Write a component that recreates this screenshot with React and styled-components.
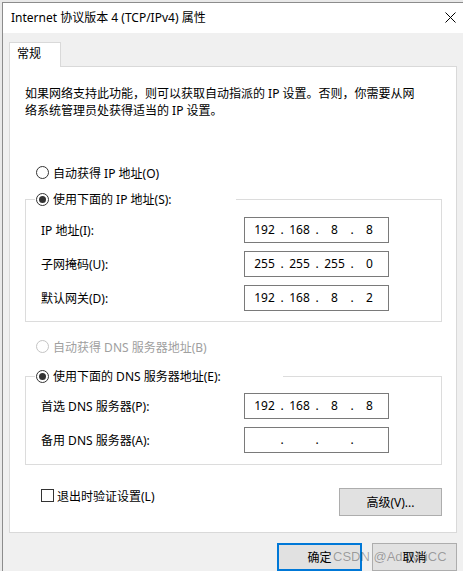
import React from 'react';
import styled, { createGlobalStyle } from 'styled-components';

const GlobalStyle = createGlobalStyle`
  html, body {
    margin: 0;
    padding: 0;
    background: #e9e9e9;
    overflow: hidden;
  }
  body {
    font-family: "Noto Sans", "Noto Sans CJK SC", sans-serif;
    font-size: 12px;
    color: #000;
  }
`;

const Page = styled.div`
  position: relative;
  width: 463px;
  height: 571px;
  overflow: hidden;
`;

const Window = styled.div`
  margin: 2px 0 0 2px;
  width: 470px;
  height: 580px;
  border-top: 1px solid #8c8c8c;
  border-left: 1px solid #8c8c8c;
  background: #f0f0f0;
`;

const TitleBar = styled.div`
  height: 30px;
  background: #fff;
  display: flex;
  align-items: center;
  justify-content: space-between;
  padding: 0 7px 0 8px;
  width: 460px;
  box-sizing: border-box;
`;

const Title = styled.span`
  line-height: 16px;
  margin-top: -1px;
  white-space: nowrap;
`;

const CloseIcon = styled.svg`
  display: block;
  margin-top: -1px;
`;

const Body = styled.div`
  padding: 9px 0 0 6px;
`;

const TabRow = styled.div`
  display: flex;
`;

const Tab = styled.div`
  position: relative;
  z-index: 1;
  height: 25px;
  box-sizing: border-box;
  padding: 0 7px;
  line-height: 22px;
  border: 1px solid #d9d9d9;
  border-bottom: none;
  background: #fff;
  margin-bottom: -1px;
  width: 52px;
`;

const Panel = styled.div`
  width: 448px;
  height: 467px;
  box-sizing: border-box;
  background: #fff;
  border: 1px solid #d9d9d9;
  padding: 18px 14px 0 15px;
  display: flex;
  flex-direction: column;
  align-items: flex-start;
`;

const Description = styled.p`
  margin: 0;
  line-height: 17px;
  white-space: nowrap;
`;

const RadioRow = styled.label`
  display: flex;
  align-items: center;
  gap: 4px;
  height: ${p => p.$height || 17}px;
  margin-left: ${p => p.$indent || 0}px;
  margin-top: ${p => p.$top || 0}px;
  color: ${p => (p.$disabled ? '#a0a0a0' : '#000')};
  white-space: nowrap;
`;

const RadioCircle = styled.span`
  width: 13px;
  height: 13px;
  box-sizing: border-box;
  border-radius: 50%;
  border: 1px solid ${p => (p.$disabled ? '#c4c4c4' : '#333')};
  background: #fff;
  display: flex;
  align-items: center;
  justify-content: center;
  flex: none;

  &::after {
    content: '';
    width: 7px;
    height: 7px;
    border-radius: 50%;
    background: #333;
    display: ${p => (p.$checked ? 'block' : 'none')};
  }
`;

const Group = styled.fieldset`
  margin: ${p => p.$top}px 0 0 0;
  padding: 0;
  min-width: 0;
  width: 417px;
  box-sizing: border-box;
  border: 1px solid #dcdcdc;
`;

const Legend = styled.legend`
  margin-left: 9px;
  padding: 0 0 0 1px;
  width: ${p => p.$width}px;
  box-sizing: border-box;
`;

const Rows = styled.div`
  display: flex;
  flex-direction: column;
  gap: 8px;
  padding: ${p => p.$top}px 0 ${p => p.$bottom}px 15px;
`;

const FieldRow = styled.div`
  display: grid;
  grid-template-columns: 203px 145px;
  align-items: center;
`;

const FieldLabel = styled.span`
  white-space: nowrap;
`;

const IpBox = styled.div`
  height: 26px;
  box-sizing: border-box;
  border: 1px solid #7a7a7a;
  background: #fff;
  display: grid;
  grid-template-columns: 29px 6px 29px 6px 29px 6px 29px;
  align-items: center;
  padding-left: 5px;
  line-height: 16px;
`;

const Octet = styled.span`
  text-align: center;
`;

const Dot = styled.span`
  text-align: center;
`;

const Footer = styled.div`
  width: 417px;
  margin-top: 23px;
  padding-left: 16px;
  box-sizing: border-box;
  display: flex;
  justify-content: space-between;
  align-items: flex-start;
`;

const CheckRow = styled.label`
  display: flex;
  align-items: center;
  gap: 3px;
  height: 15px;
  white-space: nowrap;
`;

const CheckBox = styled.span`
  width: 13px;
  height: 13px;
  box-sizing: border-box;
  border: 1px solid #333;
  background: #fff;
  flex: none;
`;

const Button = styled.div`
  width: ${p => p.$width}px;
  height: 28px;
  box-sizing: border-box;
  background: #e1e1e1;
  border: ${p => (p.$primary ? '2px solid #0078d7' : '1px solid #adadad')};
  display: flex;
  align-items: center;
  justify-content: center;
  white-space: nowrap;
`;

const ButtonBar = styled.div`
  width: 448px;
  margin-top: 10px;
  display: flex;
  justify-content: flex-end;
  gap: 10px;
`;

const Watermark = styled.div`
  position: absolute;
  left: 333px;
  top: 549px;
  font-family: "Liberation Sans", Arial, sans-serif;
  font-size: 13px;
  line-height: 16px;
  color: rgba(0, 0, 0, 0.32);
  white-space: nowrap;
  pointer-events: none;
`;

const Radio = ({ checked, disabled, children, ...rest }) => (
  <RadioRow $disabled={disabled} {...rest}>
    <RadioCircle $checked={checked} $disabled={disabled} />
    {children}
  </RadioRow>
);

const IpField = ({ value }) => {
  const parts = value ? value.split('.') : ['', '', '', ''];
  return (
    <IpBox>
      {parts.map((p, i) => (
        <React.Fragment key={i}>
          {i > 0 && <Dot>.</Dot>}
          <Octet>{p}</Octet>
        </React.Fragment>
      ))}
    </IpBox>
  );
};

const App = () => (
  <Page>
    <GlobalStyle />
    <Window>
      <TitleBar>
        <Title>Internet 协议版本 4 (TCP/IPv4) 属性</Title>
        <CloseIcon width="11" height="11" viewBox="0 0 11 11">
          <path d="M0.5 0.5L10.5 10.5M10.5 0.5L0.5 10.5" stroke="#000" strokeWidth="1" fill="none" />
        </CloseIcon>
      </TitleBar>
      <Body>
        <TabRow>
          <Tab>常规</Tab>
        </TabRow>
        <Panel>
          <Description>
            如果网络支持此功能，则可以获取自动指派的 IP 设置。否则，你需要从网
            <br />
            络系统管理员处获得适当的 IP 设置。
          </Description>

          <Radio $indent={11} $top={45}>自动获得 IP 地址(O)</Radio>

          <Group $top={9}>
            <Legend $width={201}>
              <Radio checked $height={18}>使用下面的 IP 地址(S):</Radio>
            </Legend>
            <Rows $top={9} $bottom={10}>
              <FieldRow>
                <FieldLabel>IP 地址(I):</FieldLabel>
                <IpField value="192.168.8.8" />
              </FieldRow>
              <FieldRow>
                <FieldLabel>子网掩码(U):</FieldLabel>
                <IpField value="255.255.255.0" />
              </FieldRow>
              <FieldRow>
                <FieldLabel>默认网关(D):</FieldLabel>
                <IpField value="192.168.8.2" />
              </FieldRow>
            </Rows>
          </Group>

          <Radio disabled $indent={11} $top={16}>自动获得 DNS 服务器地址(B)</Radio>

          <Group $top={12}>
            <Legend $width={248}>
              <Radio checked $height={18}>使用下面的 DNS 服务器地址(E):</Radio>
            </Legend>
            <Rows $top={8} $bottom={11}>
              <FieldRow>
                <FieldLabel>首选 DNS 服务器(P):</FieldLabel>
                <IpField value="192.168.8.8" />
              </FieldRow>
              <FieldRow>
                <FieldLabel>备用 DNS 服务器(A):</FieldLabel>
                <IpField />
              </FieldRow>
            </Rows>
          </Group>

          <Footer>
            <CheckRow>
              <CheckBox />
              退出时验证设置(L)
            </CheckRow>
            <Button $width={103}>高级(V)...</Button>
          </Footer>
        </Panel>
        <ButtonBar>
          <Button $primary $width={85}>确定</Button>
          <Button $width={85}>取消</Button>
        </ButtonBar>
      </Body>
    </Window>
    <Watermark>CSDN @AdaMuCC</Watermark>
  </Page>
);

export default App;
